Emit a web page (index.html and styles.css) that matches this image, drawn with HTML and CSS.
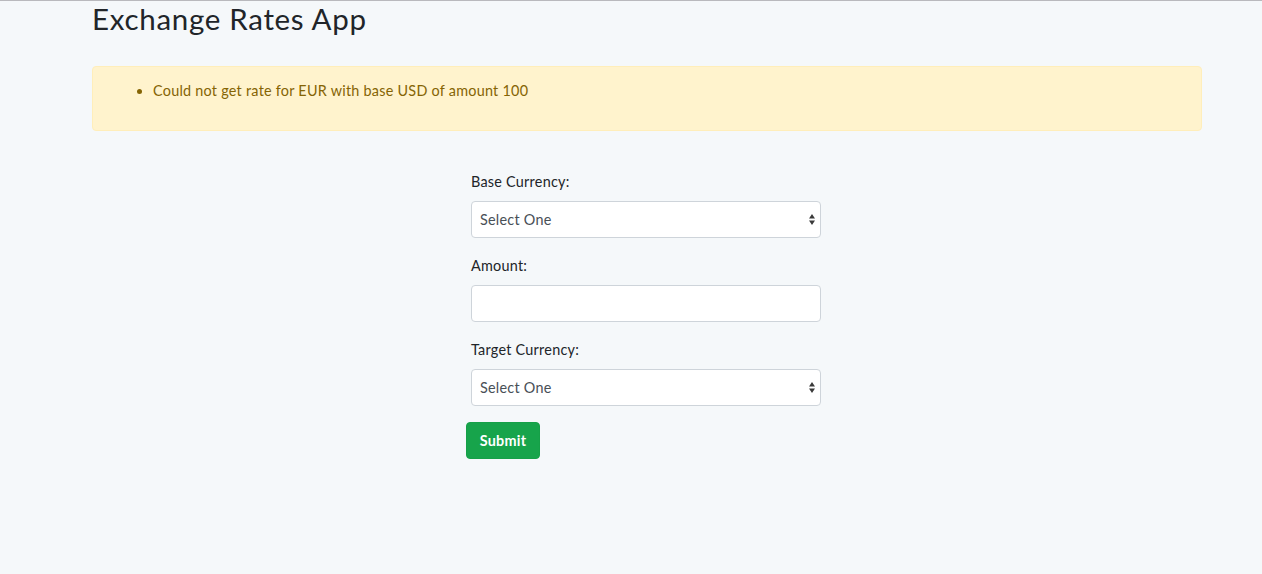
FILE: index.html
```html
<!DOCTYPE html>
<html lang="en">
<head>
<meta charset="utf-8">
<title>Exchange Rates App</title>
<link rel="stylesheet" href="styles.css">
</head>
<body>
<div class="container">
  <h2 class="title">Exchange Rates App</h2>
  <div class="alert">
    <ul>
      <li>Could not get rate for EUR with base USD of amount 100</li>
    </ul>
  </div>
  <form class="form">
    <div class="group">
      <label for="base">Base Currency:</label>
      <div class="select-wrap">
        <select id="base" class="control"><option>Select One</option></select>
        <svg class="arrows" width="6" height="11" viewBox="0 0 6 11"><path d="M3 0 L6 4.5 L0 4.5 Z M3 11 L6 6.5 L0 6.5 Z" fill="#3a3a3a"/></svg>
      </div>
    </div>
    <div class="group">
      <label for="amount">Amount:</label>
      <input id="amount" class="control" type="text">
    </div>
    <div class="group">
      <label for="target">Target Currency:</label>
      <div class="select-wrap">
        <select id="target" class="control"><option>Select One</option></select>
        <svg class="arrows" width="6" height="11" viewBox="0 0 6 11"><path d="M3 0 L6 4.5 L0 4.5 Z M3 11 L6 6.5 L0 6.5 Z" fill="#3a3a3a"/></svg>
      </div>
    </div>
    <button type="button" class="btn">Submit</button>
  </form>
</div>
</body>
</html>
```
FILE: styles.css
```css
* { box-sizing: border-box; }
html, body { margin: 0; padding: 0; }
body {
  background: #f5f8fa;
  border-top: 1px solid #b9b9bd;
  font-family: Lato, "Open Sans", sans-serif;
  font-size: 14.4px;
  line-height: 1.6;
  color: #212529;
  letter-spacing: 0.25px;
  min-height: 574px;
}
.container {
  margin-left: 92px;
  width: 1110px;
}
.title {
  margin: 0 0 30px 0;
  font-size: 29.5px;
  font-weight: 400;
  line-height: 1.2;
  letter-spacing: 0.7px;
  padding-top: 0;
}
.alert {
  background: #fff3cd;
  border: 1px solid #ffeeba;
  color: #856404;
  border-radius: 4px;
  padding: 12px 20px;
  margin-bottom: 39px;
}
.alert ul { margin: 0 0 16px 0; padding-left: 40px; }
.form {
  margin-left: 374px;
  width: 360px;
}
.group {
  padding-left: 5px;
  margin-bottom: 16px;
}
.group label {
  display: block;
  line-height: 24px;
  margin-bottom: 7px;
}
.select-wrap { position: relative; width: 350px; }
.control {
  display: block;
  width: 350px;
  height: 37px;
  border: 1px solid #ced4da;
  border-radius: 4px;
  background: #fff;
  font-family: inherit;
  font-size: 14.4px;
  letter-spacing: 0.25px;
  color: #495057;
  padding: 0 8px;
  margin: 0;
  -webkit-appearance: none;
  appearance: none;
}
.arrows {
  position: absolute;
  right: 6px;
  top: 13px;
  pointer-events: none;
}
.btn {
  display: block;
  background: #17a44b;
  color: #fff;
  border: 1px solid #16a048;
  border-radius: 4px;
  font-family: inherit;
  font-size: 14.4px;
  font-weight: 700;
  letter-spacing: 0.25px;
  width: 74px;
  height: 37px;
  padding: 0;
}
```
